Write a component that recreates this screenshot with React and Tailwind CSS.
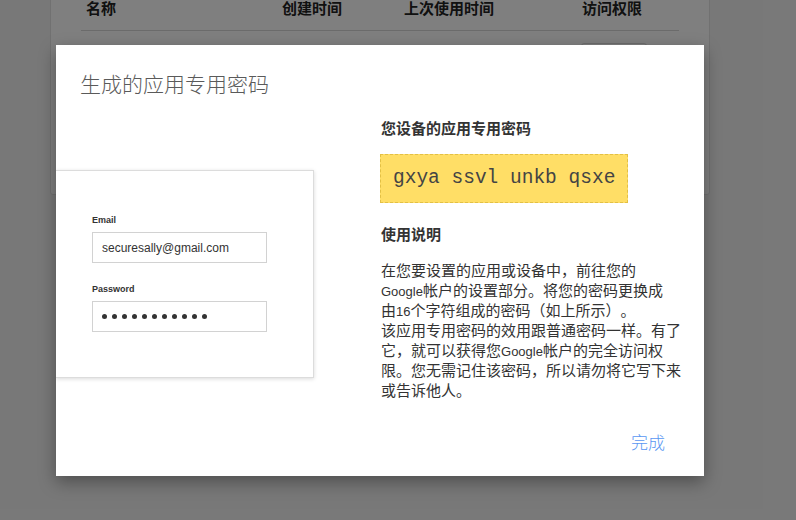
const CJK = { fontFamily: '"Noto Sans CJK SC", "Liberation Sans", sans-serif' };

const LINES = [
  ["在您要设置的应用或设备中，前往您的"],
  ["", "Google", "帐户的设置部分。将您的密码更换成"],
  ["由", "16", "个字符组成的密码（如上所示）。"],
  ["该应用专用密码的效用跟普通密码一样。有了"],
  ["它，就可以获得您", "Google", "帐户的完全访问权"],
  ["限。您无需记住该密码，所以请勿将它写下来"],
  ["或告诉他人。"],
];

function Latin({ children }) {
  return (
    <span className="text-[13px] leading-[20px]" style={{ fontFamily: '"Liberation Sans", sans-serif' }}>
      {children}
    </span>
  );
}

function BackgroundCard() {
  return (
    <div className="ml-[50px] -mt-[10px] w-[660px] h-[205px] bg-white border border-[#e2e2e2] rounded-b-[3px]">
      <div className="mx-[30px] border-b border-[#d6d6d6] pt-[10px] pb-[15px] pl-[5px] flex text-[15px] leading-[14px] font-bold text-[#222]">
        <div className="w-[196px]">名称</div>
        <div className="w-[122px]">创建时间</div>
        <div className="w-[178px]">上次使用时间</div>
        <div>访问权限</div>
      </div>
      <div className="mt-[12px] ml-[530px] w-[66px] h-[30px] border border-[#d8d8d8] rounded-[3px]" />
    </div>
  );
}

function SignInCard() {
  return (
    <div
      className="mt-[73px] w-[258px] h-[208px] border border-l-0 border-[#dcdcdc] bg-white shadow-[0_1px_4px_rgba(0,0,0,0.15)] pl-[36px] pt-[43px]"
      style={{ fontFamily: '"Liberation Sans", Arial, sans-serif' }}
    >
      <div className="text-[9px] leading-[12px] font-bold text-[#333] mb-[6px]">Email</div>
      <div className="w-[175px] h-[31px] border border-[#d2d2d2] flex items-center pl-[9px] text-[12px] text-[#333]">
        securesally@gmail.com
      </div>
      <div className="mt-[20px] text-[9px] leading-[12px] font-bold text-[#333] mb-[6px]">Password</div>
      <div className="w-[175px] h-[31px] border border-[#d2d2d2] flex items-center pl-[9px] gap-[5px]">
        {Array.from({ length: 11 }).map((_, i) => (
          <span key={i} className="w-[5px] h-[5px] rounded-full bg-[#333]" />
        ))}
      </div>
    </div>
  );
}

export default function App() {
  return (
    <div className="relative w-full h-[520px] bg-[#f1f1f1] overflow-hidden" style={CJK}>
      <BackgroundCard />

      <div className="absolute inset-0 bg-black/50" />

      <div className="absolute left-[56px] top-[45px] w-[648px] h-[431px] bg-white shadow-[0_6px_16px_rgba(0,0,0,0.35)] flex flex-col overflow-hidden">
        <div className="pt-[24px] pl-[24px] text-[21px] leading-[28px] font-light text-[#5a5a5a]">
          生成的应用专用密码
        </div>

        <div className="flex flex-1">
          <SignInCard />

          <div className="ml-[67px] w-[310px] text-[#333]">
            <div className="mt-[21px] text-[15px] leading-[20px] font-bold">您设备的应用专用密码</div>
            <div className="mt-[16px] w-[248px] h-[49px] bg-[#ffde66] border border-dashed border-[#e3c045] flex items-center pl-[12px] -ml-px">
              <span
                className="text-[19.5px] text-[#444] whitespace-nowrap"
                style={{ fontFamily: '"Liberation Mono", "Courier New", monospace' }}
              >
                gxya ssvl unkb qsxe
              </span>
            </div>
            <div className="mt-[21px] text-[15px] leading-[20px] font-bold">使用说明</div>
            <div className="mt-[16px] text-[15px] leading-[20px] [text-spacing-trim:space-all]">
              {LINES.map((parts, i) => (
                <div key={i} className="h-[20px] whitespace-nowrap overflow-visible">
                  {parts.map((p, j) => (j % 2 === 1 ? <Latin key={j}>{p}</Latin> : <span key={j}>{p}</span>))}
                </div>
              ))}
            </div>
          </div>
        </div>

        <div className="flex justify-end pr-[39px] pb-[22px]">
          <button className="text-[17px] leading-[24px] font-light text-[#5a97f2]">完成</button>
        </div>
      </div>
    </div>
  );
}
